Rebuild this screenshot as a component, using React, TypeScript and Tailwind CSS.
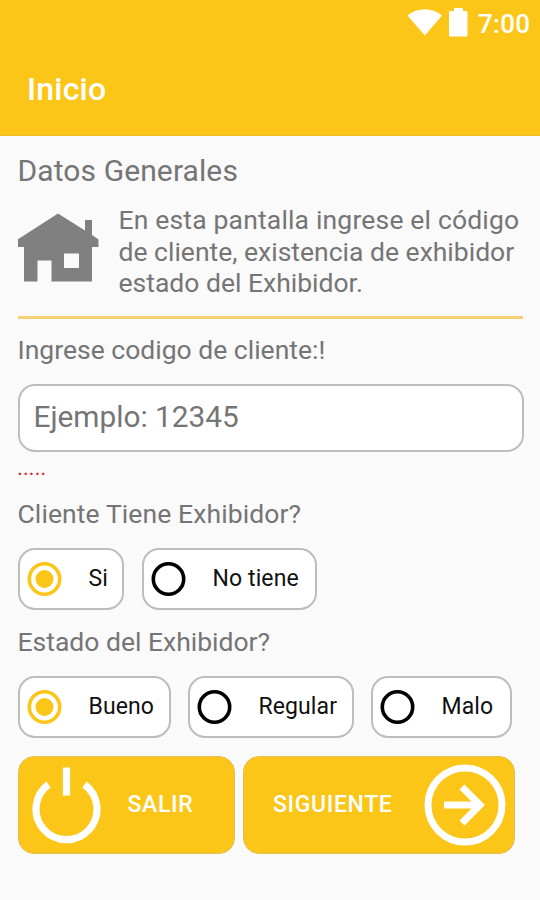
const YELLOW = '#fcc618';

function StatusBar() {
  return (
    <div className="h-12 flex items-start text-white">
      <svg className="ml-[407px] mt-[8px] shrink-0" width="36" height="28" viewBox="0 0 36 28" fill="currentColor">
        <path d="M0.5 7.5C10.5-0.8 25-0.8 35 7.5L17.8 27.5Z" />
      </svg>
      <svg className="ml-[6px] mt-[8px] shrink-0" width="19" height="29" viewBox="0 0 19 29" fill="currentColor">
        <path d="M5 0h9v3h3.2q1.3 0 1.3 1.3v23q0 1.2-1.3 1.2H1.3Q0 28.5 0 27.3v-23Q0 3 1.3 3H5z" />
      </svg>
      <span className="ml-[10px] mt-[8px] text-[26px] leading-8 font-medium tracking-[0.3px]">7:00</span>
    </div>
  );
}

function HouseIcon() {
  return (
    <svg className="mt-[9px] shrink-0" width="82" height="70" viewBox="0 0 82 70" fill="#808080">
      <path
        fillRule="evenodd"
        d="M40 0.5L67 17.5V7H74V22L80.5 26.5V34H74V68.5H33.5V47.5H19.5V68.5H6V34H-0.5V26.5ZM46 40.5V55H61V40.5Z"
      />
    </svg>
  );
}

function Option({ label, width, checked }: { label: string; width: string; checked?: boolean }) {
  return (
    <label className={`${width} h-[62px] flex items-center bg-white border-2 border-[#bdbdbd] rounded-[17px] pl-[7px]`}>
      <svg
        className="shrink-0"
        width="36"
        height="36"
        viewBox="0 0 36 36"
        fill="none"
        stroke={checked ? YELLOW : '#000'}
      >
        <circle cx="17.5" cy="18" r="15.2" strokeWidth="3.6" />
        {checked && <circle cx="17.5" cy="18" r="9" fill={YELLOW} stroke="none" />}
      </svg>
      <span className="ml-[26px] text-[23px] leading-7 text-[#111] tracking-[0.1px] whitespace-nowrap">{label}</span>
    </label>
  );
}

export default function App() {
  return (
    <div className="w-[540px] h-[900px] overflow-hidden bg-[#fafafa] text-[#757575] font-['Roboto',sans-serif]">
      <header className="h-[136px] bg-[#fcc618] border-b border-[#eebd2c]">
        <StatusBar />
        <h1 className="pl-[27px] pt-[21px] text-[32px] leading-10 font-medium tracking-[0.2px] text-white">Inicio</h1>
      </header>

      <main className="px-[17.5px]">
        <h2 className="pt-[15px] text-[30px] leading-10 tracking-[0.1px]">Datos Generales</h2>

        <div className="flex h-[115px] mt-[13px] w-[505px] border-b-[3px] border-[#f8d272]">
          <HouseIcon />
          <p className="ml-[19px] text-[26.5px] leading-[31.5px] whitespace-nowrap">
            <span className="tracking-[0.17px]">En esta pantalla ingrese el código</span>
            <br />
            de cliente, existencia de exhibidor
            <br />
            estado del Exhibidor.
          </p>
        </div>

        <p className="mt-[11px] text-[26.5px] leading-10">Ingrese codigo de cliente:!</p>
        <div className="mt-[14px] h-[68px] w-[506px] flex items-center bg-white border-2 border-[#bdbdbd] rounded-[17px] pl-[14px] pb-[1px] text-[29.8px]">
          Ejemplo: 12345
        </div>
        <p className="mt-[7px] text-[18px] leading-5 font-medium tracking-[0.8px] text-[#d32f2f]">.....</p>

        <p className="mt-[15px] text-[26.5px] leading-10 tracking-[0.1px]">Cliente Tiene Exhibidor?</p>
        <div className="mt-[14px] flex gap-[18px]">
          <Option label="Si" width="w-[106px]" checked />
          <Option label="No tiene" width="w-[175px]" />
        </div>

        <p className="mt-[12px] text-[26.5px] leading-10">Estado del Exhibidor?</p>
        <div className="mt-[14px] flex gap-[17px]">
          <Option label="Bueno" width="w-[153px]" checked />
          <Option label="Regular" width="w-[166px]" />
          <Option label="Malo" width="w-[141px]" />
        </div>

        <div className="mt-[18px] flex gap-[8px] text-[23px] font-medium tracking-[0.65px] text-white">
          <button className="w-[217.5px] h-[98px] flex items-center bg-[#fcc618] rounded-[16px] border border-[#e3bf55]">
            <svg className="ml-[13px] shrink-0" width="70" height="80" viewBox="0 0 70 80" fill="none" stroke="currentColor" strokeWidth="7.2">
              <path d="M16.5 19.5A30.5 30.5 0 1 0 52.5 19.5M34.5 2.5V30.5" />
            </svg>
            <span className="ml-[26px]">SALIR</span>
          </button>
          <button className="w-[272px] h-[98px] flex items-center bg-[#fcc618] rounded-[16px] border border-[#e3bf55]">
            <span className="ml-[29px] w-[119px] text-left">SIGUIENTE</span>
            <svg className="ml-[31.5px] shrink-0" width="82" height="82" viewBox="0 0 82 82" fill="none" stroke="currentColor" strokeWidth="7">
              <circle cx="41" cy="41" r="37" />
              <path d="M20 41H57M38 23L56 41L38 59" />
            </svg>
          </button>
        </div>
      </main>
    </div>
  );
}
